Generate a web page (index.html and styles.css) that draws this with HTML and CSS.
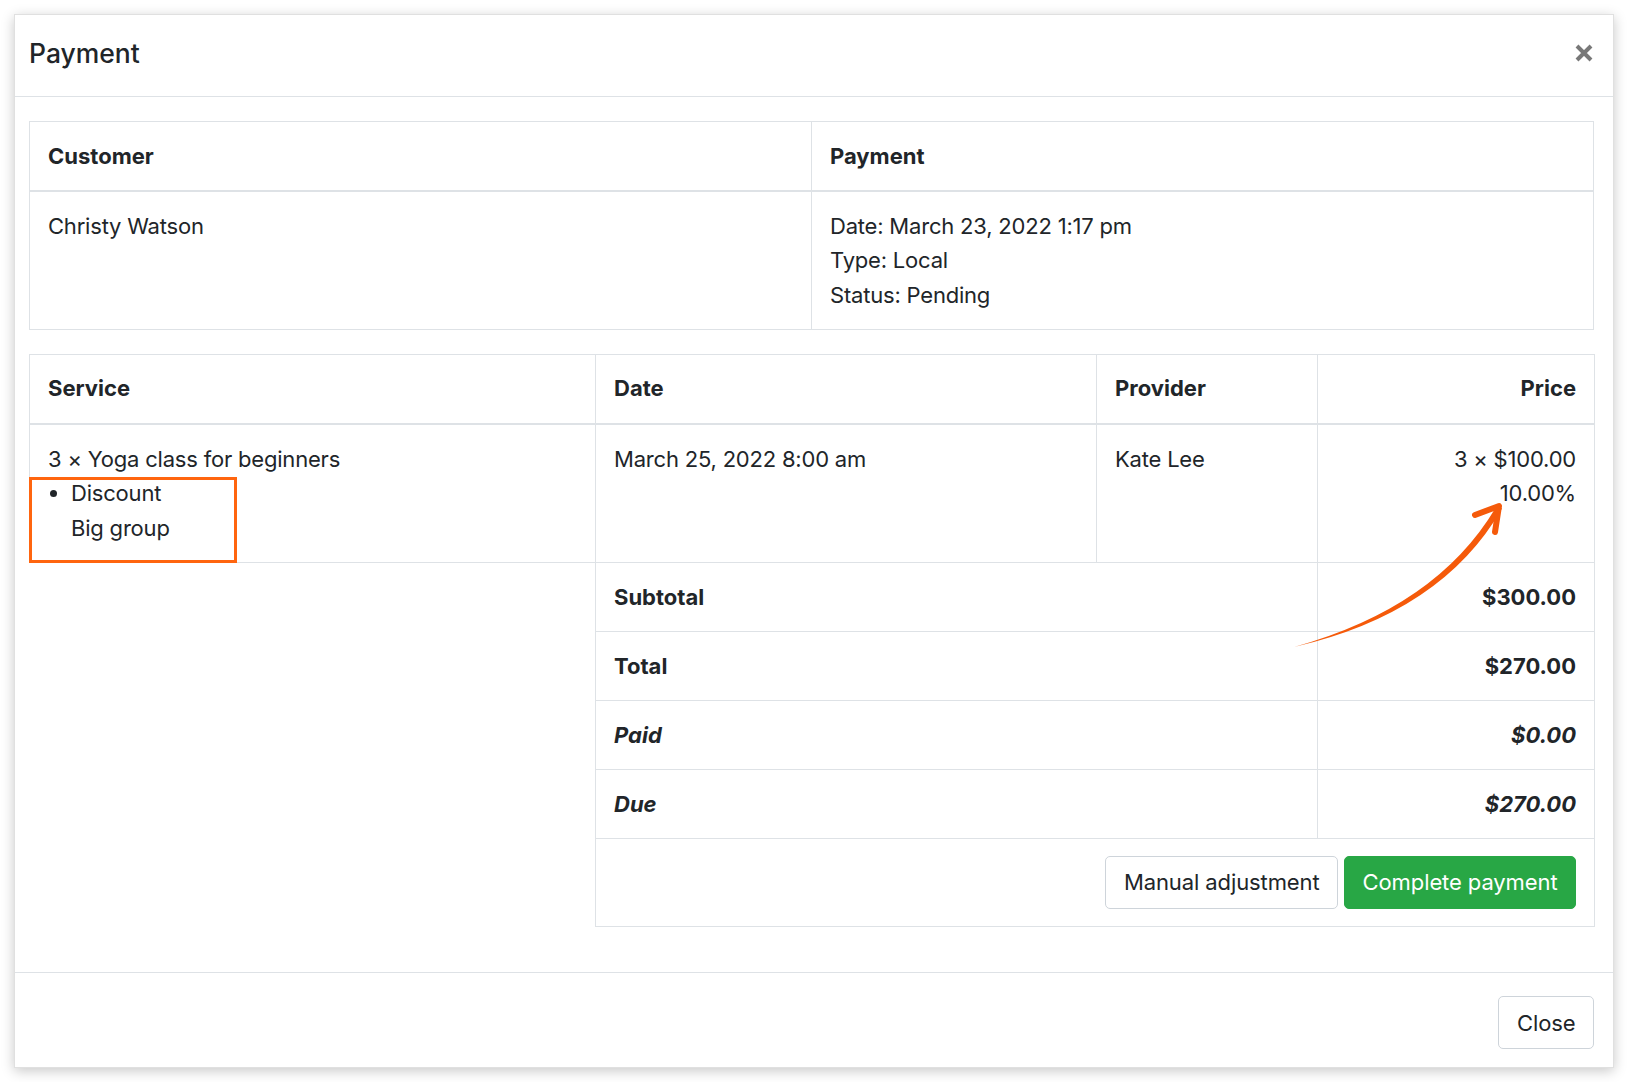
FILE: index.html
```html
<!DOCTYPE html>
<html lang="en">
<head>
  <meta charset="UTF-8">
  <meta name="viewport" content="width=device-width, initial-scale=1.0">
  <title>Payment</title>
  <link rel="stylesheet" href="styles.css">
</head>
<body>

  <!-- Payment dialog -->
  <div class="modal">
    <div class="modal-header">
      <h5 class="modal-title">Payment</h5>
      <button class="close" type="button" aria-label="Close">
        <svg width="20" height="20" viewBox="0 0 20 20"><path d="M3 3L17 17M17 3L3 17" stroke="#787878" stroke-width="4"/></svg>
      </button>
    </div>

    <div class="modal-body">
      <!-- Customer / payment info -->
      <table class="table">
        <colgroup><col class="col-half"><col class="col-half"></colgroup>
        <thead>
          <tr><th>Customer</th><th>Payment</th></tr>
        </thead>
        <tbody>
          <tr>
            <td>Christy Watson</td>
            <td>Date: March 23, 2022 1:17 pm<br>Type: Local<br>Status: Pending</td>
          </tr>
        </tbody>
      </table>

      <!-- Services and totals -->
      <table class="table">
        <colgroup>
          <col class="col-service"><col class="col-date"><col class="col-provider"><col class="col-price">
        </colgroup>
        <thead>
          <tr><th>Service</th><th>Date</th><th>Provider</th><th class="text-right">Price</th></tr>
        </thead>
        <tbody>
          <tr>
            <td>
              3 × Yoga class for beginners
              <ul class="adjustments"><li>Discount<br>Big group</li></ul>
            </td>
            <td>March 25, 2022 8:00 am</td>
            <td>Kate Lee</td>
            <td class="text-right">3 × $100.00<br>10.00%</td>
          </tr>
          <tr>
            <td class="blank" rowspan="5"></td>
            <th colspan="2">Subtotal</th>
            <th class="text-right">$300.00</th>
          </tr>
          <tr>
            <th colspan="2">Total</th>
            <th class="text-right">$270.00</th>
          </tr>
          <tr>
            <th colspan="2"><em>Paid</em></th>
            <th class="text-right"><em>$0.00</em></th>
          </tr>
          <tr>
            <th colspan="2"><em>Due</em></th>
            <th class="text-right"><em>$270.00</em></th>
          </tr>
          <tr>
            <td colspan="3">
              <div class="actions">
                <button class="btn btn-default" type="button">Manual adjustment</button>
                <button class="btn btn-success" type="button">Complete payment</button>
              </div>
            </td>
          </tr>
        </tbody>
      </table>
    </div>

    <div class="modal-footer">
      <button class="btn btn-default" type="button">Close</button>
    </div>

    <!-- Annotations drawn over the dialog -->
    <div class="note-box"></div>
    <svg class="note-arrow" width="250" height="160" viewBox="1270 495 250 160">
      <path d="M1294 647 Q1438 607 1497 505.5 L1502 508.5 Q1442 613 1294 647 Z" fill="#f55a0a"/>
      <polyline points="1475,515 1499,506 1495,532" fill="none" stroke="#f55a0a" stroke-width="6" stroke-linecap="round" stroke-linejoin="round"/>
    </svg>
  </div>

</body>
</html>
```

FILE: styles.css
```css
/* General */
body {
  margin: 0;
  padding: 14px;
  background: #fff;
  font-family: Inter, "Noto Sans", sans-serif;
  font-size: 22px;
  line-height: 34.5px;
  color: #212529;
}

/* Modal */
.modal {
  position: relative;
  width: 1600px;
  box-sizing: border-box;
  background: #fff;
  border: 1px solid rgba(0, 0, 0, 0.12);
  box-shadow: 0 3px 12px rgba(0, 0, 0, 0.22);
}

.modal-header {
  display: flex;
  justify-content: space-between;
  align-items: center;
  padding: 21px 19px 26px 14px;
  border-bottom: 1px solid #dee2e6;
}

.modal-title {
  margin: 0;
  font-size: 26.5px;
  font-weight: 500;
  line-height: 34px;
}

.close {
  display: flex;
  padding: 0;
  border: 0;
  background: none;
  cursor: pointer;
}

.modal-body {
  padding: 24px 19px 22px 14px;
}

.modal-footer {
  display: flex;
  justify-content: flex-end;
  padding: 23px 19px 18px;
  border-top: 1px solid #dee2e6;
}

/* Tables */
.table {
  width: 100%;
  table-layout: fixed;
  border-collapse: collapse;
  margin-bottom: 23.5px;
}

.table th, .table td {
  padding: 16.8px 18px;
  border: 1px solid #dee2e6;
  text-align: left;
  vertical-align: top;
}

.table td {
  letter-spacing: -0.2px;
}

.table th {
  font-weight: 700;
}

.table thead th {
  border-bottom-width: 2px;
}

.table .text-right {
  text-align: right;
}

.table td.blank {
  border: none;
}

.col-half { width: 50%; }
.col-service { width: 566px; }
.col-date { width: 501px; }
.col-provider { width: 221px; }
.col-price { width: 277px; }

.adjustments {
  margin: 0;
  padding-left: 23px;
}

/* Buttons */
.actions {
  display: flex;
  justify-content: flex-end;
  gap: 6px;
}

.btn {
  font-family: inherit;
  font-size: 22px;
  line-height: 34.5px;
  letter-spacing: -0.1px;
  padding: 8.25px 17.5px;
  border: 1px solid transparent;
  border-radius: 5px;
  cursor: pointer;
}

.btn-default {
  background: #fff;
  border-color: #ced4da;
  color: #212529;
}

.btn-success {
  background: #28a745;
  border-color: #28a745;
  color: #fff;
}

/* Annotations */
.note-box {
  position: absolute;
  left: 14px;
  top: 462px;
  width: 208px;
  height: 86px;
  box-sizing: border-box;
  border: 3px solid #ff650f;
}

.note-arrow {
  position: absolute;
  left: 1255px;
  top: 480px;
}
```
